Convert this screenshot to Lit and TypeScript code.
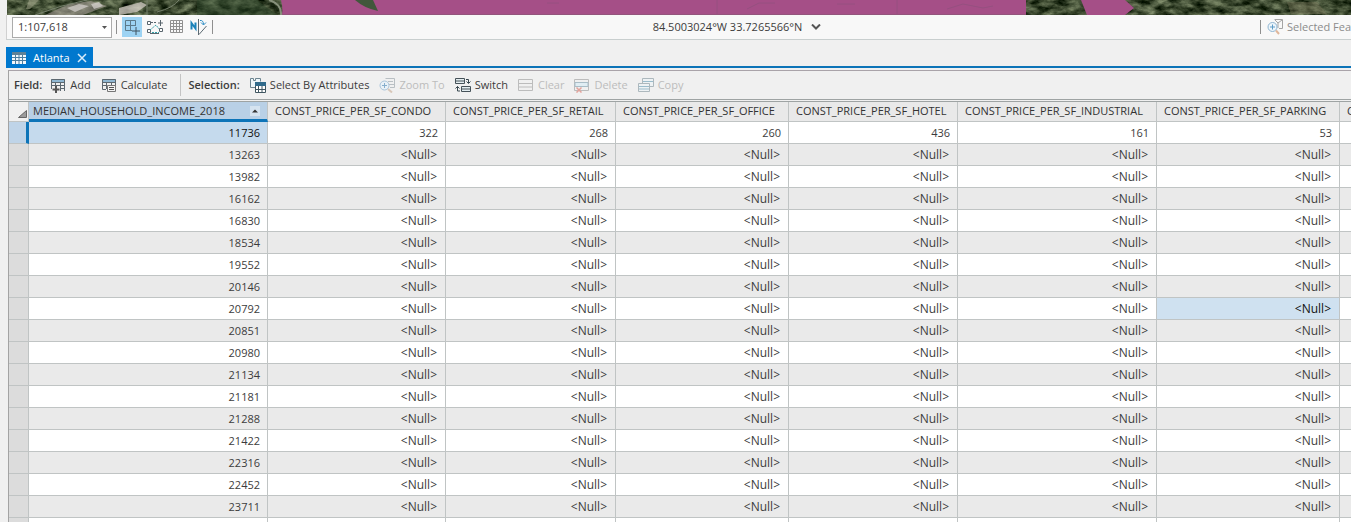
import { LitElement, html, svg, css } from "lit";
import { customElement, state } from "lit/decorators.js";
import { classMap } from "lit/directives/class-map.js";

const columns = [
  { name: "CONST_PRICE_PER_SF_CONDO", width: 178, first: "322" },
  { name: "CONST_PRICE_PER_SF_RETAIL", width: 170, first: "268" },
  { name: "CONST_PRICE_PER_SF_OFFICE", width: 173, first: "260" },
  { name: "CONST_PRICE_PER_SF_HOTEL", width: 169, first: "436" },
  { name: "CONST_PRICE_PER_SF_INDUSTRIAL", width: 199, first: "161" },
  { name: "CONST_PRICE_PER_SF_PARKING", width: 183, first: "53" },
  { name: "C", width: 178, first: "" },
];

const incomes = [
  "11736", "13263", "13982", "16162", "16830", "18534", "19552", "20146", "20792",
  "20851", "20980", "21134", "21181", "21288", "21422", "22316", "22452", "23711", "",
];

const icon = (body: unknown, size = 16) => html`<svg
  class="icon" width=${size} height=${size} viewBox="0 0 ${size} ${size}" aria-hidden="true">${body}</svg>`;

const icons = {
  add: icon(svg`<path d="M1 2h14v3H1z" fill="#8fb7d2"/>
    <path d="M1.5 12V2.5h13V14M1.5 5.5h13M1.5 8.5h13M5.5 5v3M10.5 5v9M11 11.5h3" fill="none" stroke="#5d6870"/>
    <path d="M6 9v7M2.500 12.500h7" stroke="#555" stroke-width="2"/>`),
  calculate: icon(svg`<path d="M1 2h14v3H1z" fill="#8fb7d2"/>
    <path d="M5 12.500H1.500v-10h13V9M1.500 5.500h13M1.500 8.500H6M5.500 5v7M10.500 5v3" fill="none" stroke="#5d6870"/>
    <path d="M6.500 8.500h8v6h-8z" fill="#f4f4f4" stroke="#777"/><path d="M8 10.500h5M8 12.500h5" stroke="#555"/>`),
  select: icon(svg`<path d="M5 10.500H.5v-9h3v2h2v-2h5v3" fill="#edf6fa" stroke="#6d8490"/>
    <path d="M5.500 5.500h10v10h-10z" fill="#fff" stroke="#405661"/><path d="M5 5h11v4H5z" fill="#306a8b"/>
    <path d="M6 12.500h9M8.500 9v6M12 9v6" stroke="#405661"/>`),
  zoomTo: icon(svg`<path d="M6.500 1.500h9v9H11M9 4.500h5M10 7.500h5" fill="none" stroke="#b9bfc3"/>
    <circle cx="5.500" cy="8.500" r="4.500" fill="#e9f1f7" stroke="#a9c4da"/>
    <path d="M5.500 6v5M3 8.500h5" stroke="#86aecd"/><path d="M9 12l4 3.500" stroke="#d8c7b9" stroke-width="2"/>`),
  switch: icon(svg`<path d="M.5 1.500h9v5h-9zM.5 4h9M6.500 9.500h9v5h-9zM6.500 12h9" fill="#e4edf0" stroke="#465259"/>
    <path d="M11 2.500h2.500V6M11.500 4.500l2 2 2-2M5 14H2.500V9.500M.5 11.500l2-2 2 2" fill="none" stroke="#37474f"/>`),
  clear: icon(svg`<path d="M.5 2.500h14v11H.5zM.5 6.500h14M.5 10h14" fill="none" stroke="#bcbcbc"/>`),
  remove: icon(svg`<path d="M.5 2.500h14v11H.5zM.5 9.500h14" fill="#f0f0f0" stroke="#bcbcbc"/>
    <path d="M1 5.500h13v4H1z" fill="#e0edf3" stroke="#a9bdc7"/>
    <path d="M2.500 10.500l5 5M7.500 10.500l-5 5" stroke="#e2a39c" stroke-width="1.500"/>`),
  copy: icon(svg`<path d="M4.500 1.500h11v8h-11z" fill="#eef2f4" stroke="#adb8bd"/><path d="M5 4.500h10" stroke="#9bbccb"/>
    <path d="M.5 6.500h11v8H.5z" fill="#eef2f4" stroke="#adb8bd"/><path d="M1 9.500h10M1 12h10" stroke="#9bbccb"/>`),
  snapGrid: icon(svg`<path d="M1.500 1.500h10v10h-10zM6.500 1.500v10M1.500 6.500h10" fill="none" stroke="#5c7a8b"/>
    <path d="M9 7h7v8H8V9z" fill="#9dd3f3"/><path d="M12 8v8M8 12h8" stroke="#3f5360"/>`),
  snapping: icon(svg`<path d="M.5 2.500h3v3h-3zM.5 10.500h3v3h-3zM12.500 9.500h3v3h-3z" fill="#fff" stroke="#59656d"/>
    <path d="M13.500 1v6M11 4h5M3 14.500h9" stroke="#59656d"/>
    <path d="M4 3.500h5" stroke="#59656d" stroke-dasharray="2 1"/>
    <path d="M3 11l6-5 3 4M5 13.500h7" fill="none" stroke="#35a0a8" stroke-dasharray="2 1"/>`),
  mesh: icon(svg`<path d="M1.500 1.500h12v12h-12zM4.500 1v13M7.500 1v13M10.500 1v13M1 4.500h13M1 7.500h13M1 10.500h13" fill="none" stroke="#909090"/>`),
  north: html`<svg class="icon" width="18" height="18" viewBox="0 0 18 18" aria-hidden="true">
    <path d="M1.500 11.500V5l4 5.500V4.500" fill="none" stroke="#1b82b9" stroke-width="2"/>
    <path d="M8.500 1v16M16.500 8L9 16.500" fill="none" stroke="#5c6a72"/>
    <path d="M10 2.500c2-.5 3.500 1 3.500 4M11 4.500l2.500 2.500L16 4.500" fill="none" stroke="#2b8cc4"/></svg>`,
  selected: icon(svg`<path d="M7.500 .5h8v9H12M8 1l3 3v5M15 1l-4 3" fill="none" stroke="#a4a4a4"/>
    <circle cx="5.500" cy="8" r="4.500" fill="#eef6fb" stroke="#8fb5d2"/>
    <path d="M5.500 5.500v5M3 8h5" stroke="#5f9cc8"/><path d="M9 11.500l3 3.500" stroke="#e0b79b" stroke-width="2"/>`),
  table: html`<svg class="icon" width="14" height="12" viewBox="0 0 14 12" aria-hidden="true">
    <path d="M0 0h14v12H0z" fill="#f3f8fb"/><path d="M0 0h14v3H0z" fill="#5f8297"/>
    <path d="M0 5.500h14M0 8.500h14M3.500 3v9M7 3v9M10.500 3v9" stroke="#4f7f9f"/></svg>`,
};

const commands = [
  { label: "Select By Attributes", icon: icons.select, off: false },
  { label: "Zoom To", icon: icons.zoomTo, off: true },
  { label: "Switch", icon: icons.switch, off: false },
  { label: "Clear", icon: icons.clear, off: true },
  { label: "Delete", icon: icons.remove, off: true },
  { label: "Copy", icon: icons.copy, off: true },
];

@customElement("map-strip")
class MapStrip extends LitElement {
  static styles = css`
    :host { display: block; height: 15px; overflow: hidden; background: #3b4b35; }
    svg { display: block; }
  `;
  render() {
    return html`<svg width="100%" height="15" role="img" aria-label="Aerial map of Atlanta">
      <defs>
        <filter id="ground" x="0" y="0" width="100%" height="100%" color-interpolation-filters="sRGB">
          <feTurbulence type="fractalNoise" baseFrequency="0.08 0.15" numOctaves="4" seed="7" />
          <feColorMatrix values=".8 .1 0 0 -.2  .8 .1 0 0 -.15  .7 .1 0 0 -.2  0 0 0 0 1" />
        </filter>
      </defs>
      <rect width="100%" height="15" filter="url(#ground)" />
      <path d="M38 15L62 4 84 1l16 5-24 9z" fill="#aaa19b" opacity=".6" />
      <path d="M60 8l12-4 10 2-14 6zM84 4l8-2 4 4-9 3z" fill="#d8d4d2" opacity=".7" />
      <path d="M112 8l22-6 6 3-10 7-18 3z" fill="#d3ccc5" opacity=".75" />
      <path d="M22 0l10 0-9 9-4 0z" fill="#9b9f83" opacity=".6" />
      <path d="M28 15Q54 5 80 0M140 15V0M150 12Q166 8 172 0" fill="none" stroke="#76806c" />
      <path d="M190 0h60l20 15h-80z" fill="#2c4429" opacity=".5" />
      <path d="M262 0q13 4 12 15" fill="none" stroke="#87917b" stroke-width="2" />
      <path d="M1280 2h30l10 12h-36z" fill="#8a8566" opacity=".35" />
      <path d="M274 0h745v15H275q1-8-1-15zM1074 0h44l9 8-9 7h-38z" fill="#a54f87" />
      <path d="M348 0h18l5 11q-14-3-23-11z" fill="#41573c" />
      <path d="M710 0v15M740 9l12-6h16M890 0v15M940 9l16-5 20 4 10-2M540 3h12M830 4h18" fill="none" stroke="#965080" />
      <path d="M275 14.500h744" stroke="#93547c" />
    </svg>`;
  }
}

@customElement("app-root")
class AppRoot extends LitElement {
  @state() private picked = "8:5";

  static styles = css`
    :host { display: block; height: 100vh; overflow: hidden; background: #f0f0f0; color: #3c3c3c;
      font: 11px/16px "Open Sans", "Noto Sans", sans-serif; }
    * { box-sizing: border-box; }
    button, select { font: inherit; color: inherit; background: none; border: 0; margin: 0; padding: 0; }
    .icon { display: block; flex: none; }
    .map { padding-left: 7px; }
    .status { display: flex; align-items: center; height: 25px; margin-left: 6px; padding-left: 5px;
      background: #f8f8f8; border-left: 1px solid #d0d0d0; border-bottom: 1px solid #c9cfcf; overflow: hidden; }
    .scale { display: grid; align-items: center; width: 100px; height: 21px; background: #fff; border: 1px solid #ababab; }
    .scale > * { grid-area: 1 / 1; }
    .scale select { appearance: none; width: 100%; height: 19px; padding-left: 5px; }
    .scale svg { justify-self: end; margin-right: 4px; pointer-events: none; }
    .rule { flex: none; width: 1px; height: 14px; margin: 0 5px 0 4px; background: #8f8f8f; }
    .tools { display: flex; align-items: center; gap: 4px; }
    .tool { display: grid; place-items: center; width: 18px; height: 20px; }
    .tool.on { width: 20px; background: #9dd3f3; }
    .where { display: flex; align-items: center; justify-content: center; gap: 9px; flex: 1; padding-right: 4px; }
    .chosen { display: flex; align-items: center; gap: 4px; width: 91px; white-space: nowrap; color: #8c8c8c; }
    .chosen .rule { margin: 0 2px 0 0; }
    .tabs { display: flex; height: 28px; margin-left: 6px; padding-top: 7px; border-bottom: 2px solid #0d74b8; }
    .tab { display: flex; align-items: center; gap: 7px; height: 21px; padding: 0 6px; margin-bottom: -2px;
      background: #0078ce; color: #fff; }
    .panel { margin: 2px 0 0 8px; border-top: 1px solid #a9a3a9; border-left: 1px solid #a3a3a3; }
    .bar { display: flex; align-items: center; gap: 10px; height: 29px; padding-left: 5px; border-bottom: 1px solid #9ea3a3; }
    .bar b { font-weight: 600; margin-right: -2px; }
    .bar .rule { height: 22px; margin: 0 -3px 0 3px; background: #c4c4c4; }
    .group { display: flex; gap: 10px; padding-left: 2px; }
    .cmd { display: flex; align-items: center; gap: 4px; white-space: nowrap; }
    .cmd:disabled { color: #bcbcbc; }
    .frame { margin-top: 1px; border-top: 1px solid #9ea3a3; overflow: hidden; }
    table { table-layout: fixed; width: 1509px; border-collapse: separate; border-spacing: 0; }
    th, td { height: 22px; padding: 0 7px; border-right: 1px solid #c0c4c4; border-bottom: 1px solid #c0c4c4;
      text-align: right; font-weight: 400; white-space: nowrap; overflow: hidden; }
    thead th { height: 20px; padding-bottom: 1px; background: #e9e9e9; text-align: left; color: #333; }
    thead .corner { padding: 0; background: #f0f0f0; }
    .corner svg { display: block; margin: 5px 0 0 9px; }
    thead .sorted { padding: 0 0 0 4px; background: #b9d0e6; border-bottom: 3px solid #0d74b8; }
    .sorted div { display: flex; align-items: center; justify-content: space-between; height: 17px; }
    .sorted svg { margin-right: 7px; }
    tbody tr { background: #fff; }
    tbody tr:nth-child(even) { background: #eaeaea; }
    tbody .handle { padding: 0; background: #dcdcdc; }
    .current .handle { background: #bfd4e8; border-right: 3px solid #0d74b8; }
    .current .income { background: #c5daed; color: #111; }
    .null { font-size: 12px; padding-right: 8px; }
    td.picked { background: #cfe1f0; color: #111; }
  `;

  render() {
    return html`
      <div class="map"><map-strip></map-strip></div>
      <div class="status">
        <div class="scale">
          <select aria-label="Map scale"><option>1:107,618</option></select>
          <svg width="5" height="3" viewBox="0 0 5 3"><path d="M0 0h5L2.500 3z" fill="#555" /></svg>
        </div>
        <i class="rule"></i>
        <div class="tools">
          <button class="tool on" aria-label="Snap grid">${icons.snapGrid}</button>
          <button class="tool" aria-label="Snapping">${icons.snapping}</button>
          <button class="tool" aria-label="Grid">${icons.mesh}</button>
          <button class="tool" aria-label="Correct north">${icons.north}</button>
        </div>
        <i class="rule"></i>
        <div class="where">
          <span>84.5003024°W 33.7265566°N</span>
          <button aria-label="Coordinate format"><svg class="icon" width="10" height="6" viewBox="0 0 10 6">
            <path d="M1 .5l4 4 4-4" fill="none" stroke="#555" stroke-width="2" /></svg></button>
        </div>
        <div class="chosen"><i class="rule"></i>${icons.selected}<span>Selected Features: 1</span></div>
      </div>
      <div class="tabs">
        <div class="tab">${icons.table}<span>Atlanta</span>
          <button aria-label="Close Atlanta"><svg class="icon" width="10" height="10" viewBox="0 0 10 10">
            <path d="M1 1l8 8M9 1L1 9" stroke="#d8ecfa" stroke-width="1.500" /></svg></button>
        </div>
      </div>
      <div class="panel">
        <div class="bar">
          <b>Field:</b>
          <button class="cmd">${icons.add}Add</button>
          <button class="cmd">${icons.calculate}Calculate</button>
          <i class="rule"></i>
          <b>Selection:</b>
          <div class="group">
            ${commands.map((c) => html`<button class="cmd" ?disabled=${c.off}>${c.icon}${c.label}</button>`)}
          </div>
        </div>
        <div class="frame">
          <table>
            <colgroup>
              <col style="width:20px" /><col style="width:239px" />
              ${columns.map((c) => html`<col style="width:${c.width}px" />`)}
            </colgroup>
            <thead>
              <tr>
                <th class="corner"><svg width="9" height="8" viewBox="0 0 9 8"><path d="M8.500 .5v7h-8z" fill="#9b9b9b" stroke="#666" /></svg></th>
                <th class="sorted" aria-sort="ascending"><div>MEDIAN_HOUSEHOLD_INCOME_2018
                  <svg width="10" height="10" viewBox="0 0 10 10"><path d="M0 0h10v10H0z" fill="#d5e3f0" /><path d="M2 6.500h6L5 3.500z" fill="#333" /></svg></div></th>
                ${columns.map((c) => html`<th>${c.name}</th>`)}
              </tr>
            </thead>
            <tbody>
              ${incomes.map((income, r) => html`<tr class=${classMap({ current: r === 0 })}>
                <td class="handle"></td>
                <td class="income">${income}</td>
                ${columns.map((c, i) => html`<td
                  class=${classMap({ null: r > 0, picked: this.picked === `${r}:${i}` })}
                  @click=${() => (this.picked = `${r}:${i}`)}>${r === 0 ? c.first : income && c.first ? "<Null>" : ""}</td>`)}
              </tr>`)}
            </tbody>
          </table>
        </div>
      </div>`;
  }
}
